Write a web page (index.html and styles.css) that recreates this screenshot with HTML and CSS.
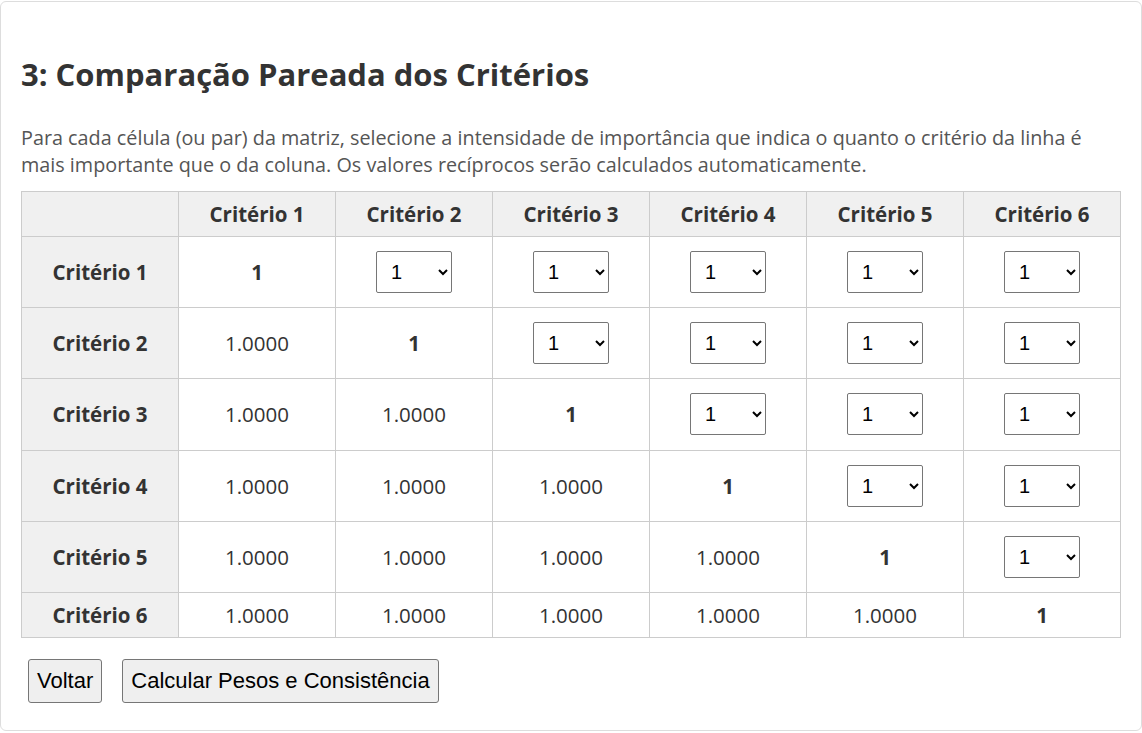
FILE: index.html
```html
<!DOCTYPE html>
<html lang="pt">
<head>
<meta charset="utf-8">
<title>Comparação Pareada dos Critérios</title>
<link rel="stylesheet" href="styles.css">
</head>
<body>
<div class="card">
  <h2 class="title">3: Comparação Pareada dos Critérios</h2>
  <p class="intro">Para cada célula (ou par) da matriz, selecione a intensidade de importância que indica o quanto o critério da linha é mais importante que o da coluna. Os valores recíprocos serão calculados automaticamente.</p>
  <table class="matrix">
    <thead>
      <tr><th class="corner"></th><th>Critério 1</th><th>Critério 2</th><th>Critério 3</th><th>Critério 4</th><th>Critério 5</th><th>Critério 6</th></tr>
    </thead>
    <tbody>
      <tr><th>Critério 1</th><td class="diag">1</td>
        <td><select class="sel"><option>1</option></select></td>
        <td><select class="sel"><option>1</option></select></td>
        <td><select class="sel"><option>1</option></select></td>
        <td><select class="sel"><option>1</option></select></td>
        <td><select class="sel"><option>1</option></select></td></tr>
      <tr><th>Critério 2</th><td>1.0000</td><td class="diag">1</td>
        <td><select class="sel"><option>1</option></select></td>
        <td><select class="sel"><option>1</option></select></td>
        <td><select class="sel"><option>1</option></select></td>
        <td><select class="sel"><option>1</option></select></td></tr>
      <tr><th>Critério 3</th><td>1.0000</td><td>1.0000</td><td class="diag">1</td>
        <td><select class="sel"><option>1</option></select></td>
        <td><select class="sel"><option>1</option></select></td>
        <td><select class="sel"><option>1</option></select></td></tr>
      <tr><th>Critério 4</th><td>1.0000</td><td>1.0000</td><td>1.0000</td><td class="diag">1</td>
        <td><select class="sel"><option>1</option></select></td>
        <td><select class="sel"><option>1</option></select></td></tr>
      <tr><th>Critério 5</th><td>1.0000</td><td>1.0000</td><td>1.0000</td><td>1.0000</td><td class="diag">1</td>
        <td><select class="sel"><option>1</option></select></td></tr>
      <tr><th>Critério 6</th><td>1.0000</td><td>1.0000</td><td>1.0000</td><td>1.0000</td><td>1.0000</td><td class="diag">1</td></tr>
    </tbody>
  </table>
  <div class="actions">
    <button class="btn" type="button">Voltar</button>
    <button class="btn" type="button">Calcular Pesos e Consistência</button>
  </div>
</div>
</body>
</html>
```

FILE: styles.css
```css
html, body {
  margin: 0;
  padding: 0;
  background: #fff;
}
body {
  font-family: "Open Sans", "Noto Sans", sans-serif;
  color: #333;
  padding-top: 1px;
}
.card {
  border: 1px solid #ddd;
  border-radius: 6px;
  padding: 20px;
  height: 730px;
  box-sizing: border-box;
}
.title {
  font-size: 31px;
  font-weight: 700;
  margin: 31px 0 0;
  line-height: 42px;
  color: #333;
}
.intro {
  font-size: 19.8px;
  line-height: 27px;
  color: #555;
  margin: 29px 0 13px;
}
.matrix {
  width: 100%;
  border-collapse: collapse;
  table-layout: fixed;
  font-size: 20.5px;
}
.matrix th, .matrix td {
  border: 1px solid #ccc;
  text-align: center;
  padding: 11px 8px;
  line-height: 22px;
}
.matrix th {
  background: #f0f0f0;
  font-weight: 700;
  color: #333;
}
.matrix td {
  color: #333;
  height: 48.2px;
}
.matrix tbody tr:last-child td, .matrix tbody tr:last-child th { height: auto; }
.matrix td.diag {
  font-weight: 700;
}
.sel {
  font-family: "Liberation Sans", Arial, sans-serif;
  font-size: 20px;
  width: 76px;
  height: 42px;
  padding: 0 6px 0 10px;
  border: 1px solid #767676;
  border-radius: 2px;
  background: #fff;
  color: #000;
}
.actions {
  display: flex;
  gap: 20px;
  padding-left: 7px;
  margin-top: 21px;
}
.btn {
  font-family: "Liberation Sans", Arial, sans-serif;
  font-size: 22px;
  padding: 9px 8px;
  background: #efefef;
  border: 1px solid #767676;
  border-radius: 3px;
  color: #000;
  line-height: 24px;
}
```
